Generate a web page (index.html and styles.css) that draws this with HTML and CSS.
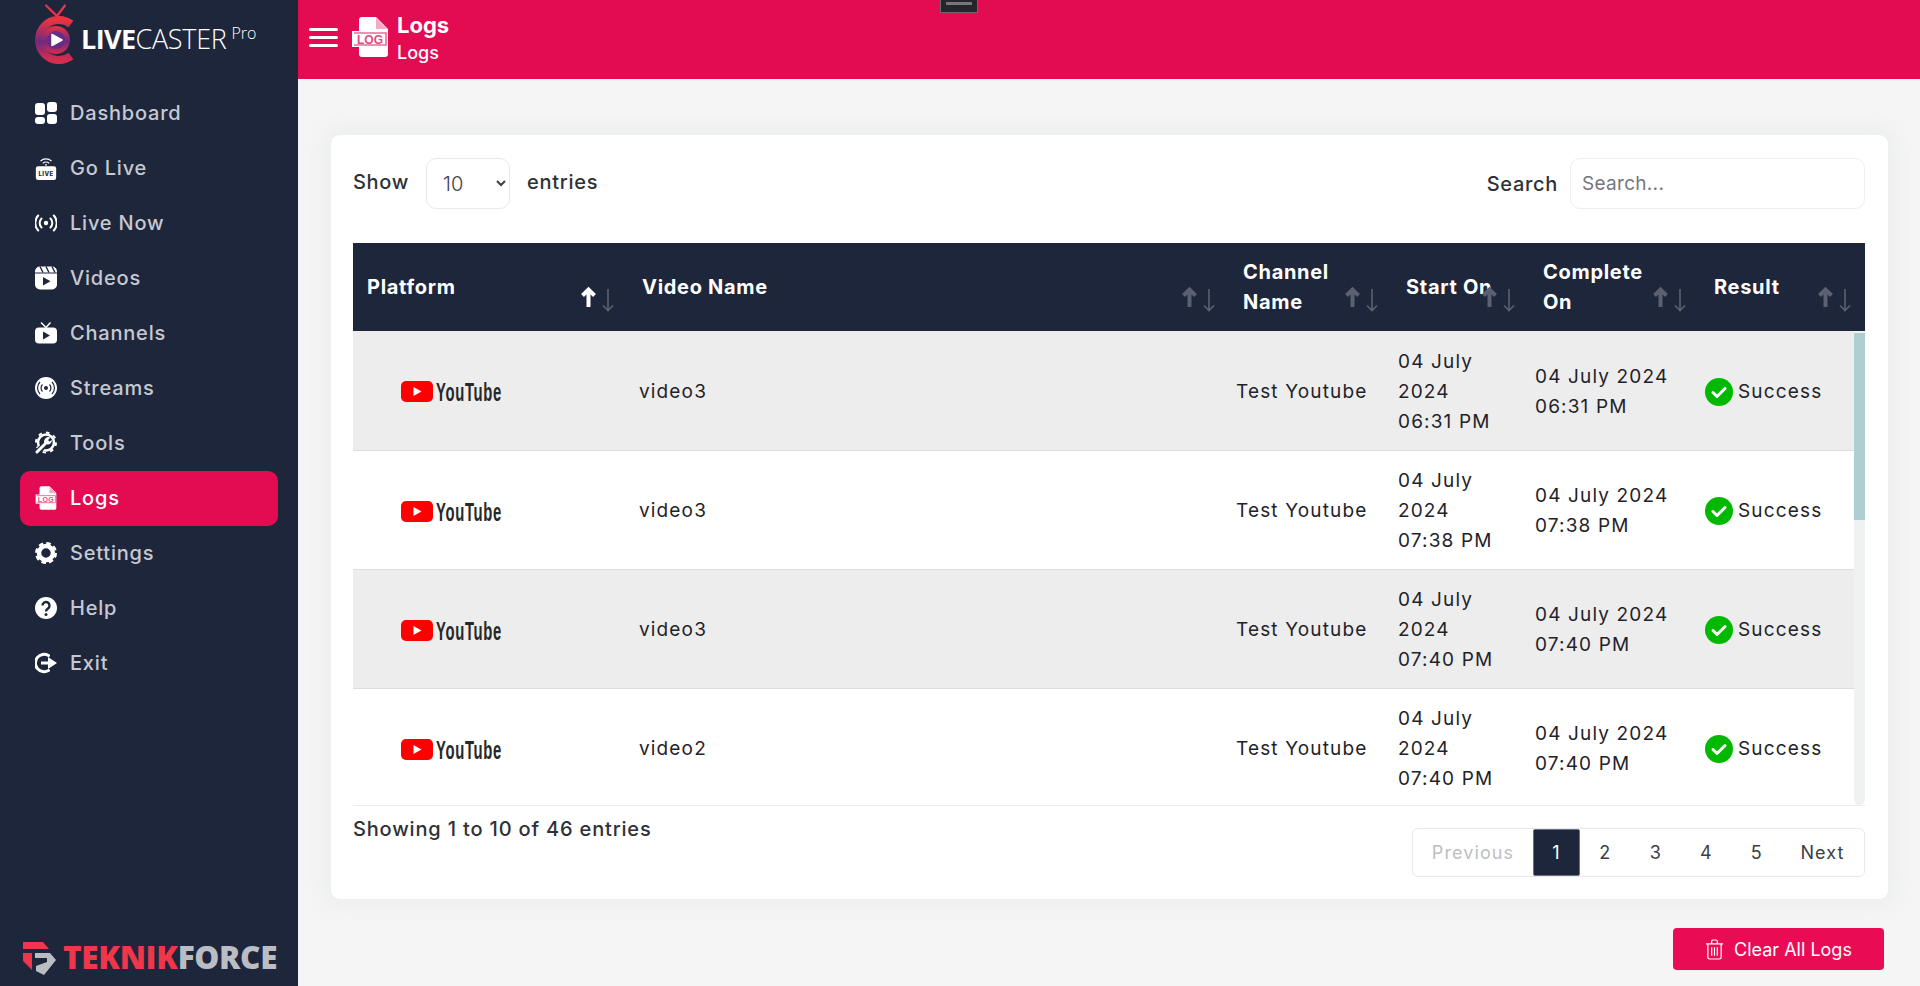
FILE: index.html
```html
<!DOCTYPE html>
<html lang="en">
<head>
<meta charset="utf-8">
<title>Logs - LiveCaster Pro</title>
<link rel="stylesheet" href="styles.css">
</head>
<body>
<svg class="defs" width="0" height="0" aria-hidden="true">
  <defs>
    <symbol id="i-log" viewBox="0 0 36 40">
      <path d="M7 0H24L36 12V37a3 3 0 0 1-3 3H10a3 3 0 0 1-3-3V30H0V14H7V3a3 3 0 0 1 3-3Z" fill="#fff"/>
      <path d="M24 1V12H35Z" fill="#f7a8c4"/>
      <path d="M2 16H34V28H2" fill="none" stroke="#f06a96" stroke-width="1.600"/>
      <text x="18" y="26.500" text-anchor="middle" class="logtxt">LOG</text>
    </symbol>
    <symbol id="i-yt" viewBox="0 0 101 21">
      <rect x="0" y="0" width="32" height="21" rx="5" fill="#f00"/>
      <path d="M12.500 6V15L20.500 10.500Z" fill="#fff"/>
      <text x="35" y="19.500" textLength="66" lengthAdjust="spacingAndGlyphs" class="yttxt">YouTube</text>
    </symbol>
    <symbol id="i-check" viewBox="0 0 28 28">
      <circle cx="14" cy="14" r="14" fill="#00b900"/>
      <path d="M8 14.500l4 4 8-8" fill="none" stroke="#fff" stroke-width="3" stroke-linecap="round" stroke-linejoin="round"/>
    </symbol>
    <symbol id="i-sort" viewBox="0 0 36 28">
      <path class="sort-up" d="M8.500 22V5M2.500 10.500L8.500 4.500L14.500 10.500" fill="none" stroke-width="4"/>
      <path class="sort-down" d="M28 4V25.500M23 20.500L28 25.500L33 20.500" fill="none" stroke-width="1.600"/>
    </symbol>
    <linearGradient id="lc" x1="0" y1="0" x2="0" y2="1">
      <stop offset="0" stop-color="#ea3340"/>
      <stop offset=".55" stop-color="#6d2a80"/>
      <stop offset="1" stop-color="#d92c4c"/>
    </linearGradient>
  </defs>
</svg>

<aside class="sidebar">
  <div class="brand">
    <svg class="brand-mark" viewBox="0 0 46 62" width="46" height="62" aria-hidden="true">
      <path d="M16 2.500L27 13L35 2.500" fill="none" stroke="#e2384a" stroke-width="2.200" stroke-linecap="round"/>
      <path d="M41 21A20 20 0 1 0 41 53" fill="none" stroke="url(#lc)" stroke-width="8"/>
      <circle cx="26" cy="37" r="14" fill="url(#lc)"/>
      <circle cx="26" cy="37" r="9" fill="#6a2b84"/>
      <path d="M22 31.500L32 37L22 42.500Z" fill="#fff" stroke="#fff" stroke-width="1.500" stroke-linejoin="round"/>
    </svg>
    <div class="brand-word"><b>LIVE</b><span>CASTER</span><sup>Pro</sup></div>
  </div>

  <nav class="nav">
    <a class="nav-item">
      <svg class="ico" viewBox="0 0 22 22"><rect x="0" y="1" width="10" height="12" rx="3" fill="#fff"/><rect x="0" y="15" width="10" height="7" rx="3" fill="#fff"/><rect x="12" y="0" width="10" height="10" rx="3" fill="#fff"/><rect x="12" y="12" width="10" height="10" rx="3" fill="#fff"/></svg>
      <span>Dashboard</span>
    </a>
    <a class="nav-item">
      <svg class="ico" viewBox="0 0 22 26"><path d="M5 5.500a8.500 8.500 0 0 1 12 0M7.500 8a5 5 0 0 1 7 0" fill="none" stroke="#fff" stroke-width="1.300"/><circle cx="11" cy="9.600" r="1" fill="#fff"/><rect x="0" y="11" width="22" height="15" rx="2.500" fill="#fff"/><text x="11" y="21.500" text-anchor="middle" class="livetxt">LIVE</text></svg>
      <span>Go Live</span>
    </a>
    <a class="nav-item">
      <svg class="ico" viewBox="0 0 22 18"><circle cx="11" cy="9" r="2.200" fill="#fff"/><path d="M6.500 4.500a6.500 6.500 0 0 0 0 9M15.500 4.500a6.500 6.500 0 0 1 0 9M3.200 1.500a11 11 0 0 0 0 15M18.800 1.500a11 11 0 0 1 0 15" fill="none" stroke="#fff" stroke-width="2" stroke-linecap="round"/></svg>
      <span>Live Now</span>
    </a>
    <a class="nav-item">
      <svg class="ico" viewBox="0 0 22 23"><path d="M0 7H22V18a5 5 0 0 1-5 5H5a5 5 0 0 1-5-5Z" fill="#fff"/><path d="M5 0H17a5 5 0 0 1 5 5V6H0V5a5 5 0 0 1 5-5Z" fill="#fff"/><path d="M5 0L8 6M11 0L14 6M17 0L20 6" stroke="#1e263b" stroke-width="1.400"/><path d="M8 10.500V19L15.500 14.700Z" fill="#1e263b"/></svg>
      <span>Videos</span>
    </a>
    <a class="nav-item">
      <svg class="ico" viewBox="0 0 22 21"><path d="M6 0L11 5L15.500 0" fill="none" stroke="#fff" stroke-width="1.500"/><rect x="0" y="5" width="22" height="16" rx="4" fill="#fff"/><path d="M8 9V17L15 13Z" fill="#1e263b"/></svg>
      <span>Channels</span>
    </a>
    <a class="nav-item">
      <svg class="ico" viewBox="0 0 22 22"><circle cx="11" cy="11" r="11" fill="#fff"/><circle cx="11" cy="11" r="2" fill="#1e263b"/><path d="M7.500 7.500a5 5 0 0 0 0 7M14.500 7.500a5 5 0 0 1 0 7M5 5a8.500 8.500 0 0 0 0 12M17 5a8.500 8.500 0 0 1 0 12" fill="none" stroke="#1e263b" stroke-width="1.200"/></svg>
      <span>Streams</span>
    </a>
    <a class="nav-item">
      <svg class="ico" viewBox="0 0 22 22"><circle cx="11" cy="10.500" r="8" fill="none" stroke="#fff" stroke-width="2.600"/><circle cx="11" cy="10.500" r="10" fill="none" stroke="#fff" stroke-width="2" stroke-dasharray="3.500 4.300"/><path d="M2 20.500L10 12.500" stroke="#1e263b" stroke-width="6"/><path d="M2 20L10 12" stroke="#fff" stroke-width="3" stroke-linecap="round"/><path d="M15.500 5.500a4.500 4.500 0 0 0-6 6l3 1a4.500 4.500 0 0 0 4.500-4.500l-2.500 1.500-1.500-1.500Z" fill="#fff"/></svg>
      <span>Tools</span>
    </a>
    <a class="nav-item active">
      <svg class="ico" viewBox="0 0 22 25"><use href="#i-log"/></svg>
      <span>Logs</span>
    </a>
    <a class="nav-item">
      <svg class="ico" viewBox="0 0 22 22"><circle cx="11" cy="11" r="7" fill="none" stroke="#fff" stroke-width="4.500"/><circle cx="11" cy="11" r="9.500" fill="none" stroke="#fff" stroke-width="3" stroke-dasharray="4.400 3.060"/></svg>
      <span>Settings</span>
    </a>
    <a class="nav-item">
      <svg class="ico" viewBox="0 0 22 22"><circle cx="11" cy="11" r="11" fill="#fff"/><path d="M7.500 8.500a3.500 3.500 0 1 1 5.500 2.900c-1.300.9-2 1.500-2 3" fill="none" stroke="#1e263b" stroke-width="2.400"/><circle cx="11" cy="17.500" r="1.500" fill="#1e263b"/></svg>
      <span>Help</span>
    </a>
    <a class="nav-item">
      <svg class="ico" viewBox="0 0 22 22"><path d="M13.500 3.500A8.700 8.700 0 1 0 13.500 18.500" fill="none" stroke="#fff" stroke-width="3" stroke-linecap="round"/><path d="M6 9.500H13V5L22 11L13 17V12.500H6Z" fill="#fff"/></svg>
      <span>Exit</span>
    </a>
  </nav>

  <div class="vendor">
    <svg class="vendor-mark" viewBox="0 0 34 34" width="34" height="34" aria-hidden="true">
      <path d="M0 0H20L26 7H0Z" fill="#f0364a"/>
      <path d="M0 11H9V28L0 19Z" fill="#f0364a"/>
      <path d="M12 11H27L33 18L21 33L13 29V24L24 20V16H12Z" fill="#babdc4"/>
    </svg>
    <div class="vendor-word"><b>TEKNIK</b><span>FORCE</span></div>
  </div>
</aside>

<div class="main">
  <div class="notch"><i></i></div>
  <header class="topbar">
    <button class="burger" aria-label="Menu"><i></i><i></i><i></i></button>
    <svg class="top-ico" viewBox="0 0 36 40"><use href="#i-log"/></svg>
    <div class="top-title">
      <strong>Logs</strong>
      <span>Logs</span>
    </div>
  </header>

  <section class="content">
    <div class="card">
      <div class="toolbar">
        <div class="length">
          <span class="lbl">Show</span>
          <select class="entries"><option>10</option></select>
          <span class="lbl">entries</span>
        </div>
        <div class="search">
          <span class="lbl">Search</span>
          <input class="search-input" type="text" placeholder="Search...">
        </div>
      </div>

      <div class="grid-wrap">
        <table class="thead-table">
          <colgroup><col class="h1"><col class="h2"><col class="h3"><col class="h4"><col class="h5"><col class="h6"></colgroup>
          <thead>
            <tr>
              <th>Platform<svg class="sort first"><use href="#i-sort"/></svg></th>
              <th>Video Name<svg class="sort"><use href="#i-sort"/></svg></th>
              <th>Channel Name<svg class="sort"><use href="#i-sort"/></svg></th>
              <th class="nowrap">Start On<svg class="sort"><use href="#i-sort"/></svg></th>
              <th>Complete On<svg class="sort"><use href="#i-sort"/></svg></th>
              <th>Result<svg class="sort"><use href="#i-sort"/></svg></th>
            </tr>
          </thead>
        </table>
        <div class="tbody-row">
          <div class="tbody-scroll">
            <table class="tbody-table">
              <colgroup><col class="b1"><col class="b2"><col class="b3"><col class="b4"><col class="b5"><col class="b6"></colgroup>
              <tbody>
                <tr class="odd">
                  <td class="plat"><svg class="yt"><use href="#i-yt"/></svg></td>
                  <td>video3</td><td>Test Youtube</td>
                  <td><span class="d">04 July 2024</span><span class="d">06:31 PM</span></td>
                  <td><span class="d">04 July 2024</span><span class="d">06:31 PM</span></td>
                  <td><div class="ok"><svg class="check"><use href="#i-check"/></svg>Success</div></td>
                </tr>
                <tr>
                  <td class="plat"><svg class="yt"><use href="#i-yt"/></svg></td>
                  <td>video3</td><td>Test Youtube</td>
                  <td><span class="d">04 July 2024</span><span class="d">07:38 PM</span></td>
                  <td><span class="d">04 July 2024</span><span class="d">07:38 PM</span></td>
                  <td><div class="ok"><svg class="check"><use href="#i-check"/></svg>Success</div></td>
                </tr>
                <tr class="odd">
                  <td class="plat"><svg class="yt"><use href="#i-yt"/></svg></td>
                  <td>video3</td><td>Test Youtube</td>
                  <td><span class="d">04 July 2024</span><span class="d">07:40 PM</span></td>
                  <td><span class="d">04 July 2024</span><span class="d">07:40 PM</span></td>
                  <td><div class="ok"><svg class="check"><use href="#i-check"/></svg>Success</div></td>
                </tr>
                <tr>
                  <td class="plat"><svg class="yt"><use href="#i-yt"/></svg></td>
                  <td>video2</td><td>Test Youtube</td>
                  <td><span class="d">04 July 2024</span><span class="d">07:40 PM</span></td>
                  <td><span class="d">04 July 2024</span><span class="d">07:40 PM</span></td>
                  <td><div class="ok"><svg class="check"><use href="#i-check"/></svg>Success</div></td>
                </tr>
              </tbody>
            </table>
          </div>
          <div class="track"><div class="thumb"></div></div>
        </div>
      </div>

      <div class="foot">
        <div class="info">Showing 1 to 10 of 46 entries</div>
        <div class="pager">
          <a class="pg prev">Previous</a>
          <a class="pg num current">1</a>
          <a class="pg num">2</a>
          <a class="pg num">3</a>
          <a class="pg num">4</a>
          <a class="pg num">5</a>
          <a class="pg next">Next</a>
        </div>
      </div>
    </div>

    <div class="actions">
      <button class="clear">
        <svg class="trash" viewBox="0 0 20 22"><path d="M1 5H19M7 5V2.500a1.500 1.500 0 0 1 1.500-1.500h3A1.500 1.500 0 0 1 13 2.500V5M3 5V19a2 2 0 0 0 2 2H15a2 2 0 0 0 2-2V5M7 8.500V17.500M10 8.500V17.500M13 8.500V17.500" fill="none" stroke="#fff" stroke-width="1.300"/></svg>
        Clear All Logs
      </button>
    </div>
  </section>
</div>
</body>
</html>
```
FILE: styles.css
```css
* { box-sizing: border-box; }
html, body { margin: 0; height: 100%; }
body {
  display: flex;
  height: 986px;
  overflow: hidden;
  font-family: Inter, "Liberation Sans", sans-serif;
  font-size: 18px;
  color: #212529;
  background: #f5f5f5;
}
.defs { position: absolute; }
.logtxt { font: 700 12px "Liberation Sans", sans-serif; fill: #ea4a80; }
.yttxt { font: 700 25px "Liberation Sans", sans-serif; fill: #282828; }
.livetxt { font: 800 6.5px Inter, sans-serif; fill: #1e263b; letter-spacing: .4px; }

/* sidebar */
.sidebar {
  position: relative;
  z-index: 1;
  width: 298px;
  flex: none;
  display: flex;
  flex-direction: column;
  background: #1e263b;
}
.brand {
  height: 86px;
  display: flex;
  align-items: flex-start;
  padding: 3px 0 0 30px;
}
.brand-mark { flex: none; margin-right: 5px; }
.brand-word {
  margin-top: 18px;
  font-family: "Open Sans", sans-serif;
  font-size: 27px;
  line-height: 36px;
  color: #fff;
  white-space: nowrap;
}
.brand-word b { font-weight: 700; letter-spacing: -.6px; }
.brand-word span { font-weight: 300; letter-spacing: -.3px; }
.brand-word sup {
  font-size: 16px;
  font-weight: 300;
  line-height: 0;
  margin-left: 5px;
  vertical-align: 10px;
}
.nav { display: flex; flex-direction: column; padding: 0 20px; }
.nav-item {
  height: 55px;
  display: flex;
  align-items: center;
  gap: 13px;
  padding: 0 0 2px 15px;
  border-radius: 10px;
  font-size: 20px;
  font-weight: 500;
  letter-spacing: .8px;
  color: #c6c9d1;
}
.nav-item.active { background: #e30b52; color: #fff; }
.ico { width: 22px; height: 24px; flex: none; }
.vendor {
  margin-top: auto;
  height: 62px;
  display: flex;
  align-items: flex-start;
  padding: 18px 0 0 23px;
}
.vendor-mark { flex: none; margin-right: 6px; }
.vendor-word {
  margin-top: -4px;
  font-family: "Open Sans", sans-serif;
  font-size: 31.5px;
  font-weight: 800;
  line-height: 38px;
  letter-spacing: -.3px;
  white-space: nowrap;
}
.vendor-word b { font-weight: 800; color: #f0364a; }
.vendor-word span { color: #babdc4; }

/* main */
.main { flex: 1; min-width: 0; display: flex; flex-direction: column; position: relative; }
.notch {
  position: absolute;
  z-index: 2;
  top: 0;
  left: 642px;
  width: 38px;
  height: 13px;
  background: #23262a;
  border: 1px solid #6a6a6a;
  border-top: 0;
  padding: 2px 5px 0;
}
.notch i { display: block; height: 3px; background: #777; }
.topbar {
  position: relative;
  z-index: 1;
  height: 79px;
  flex: none;
  display: flex;
  align-items: flex-start;
  background: #e30b52;
  color: #fff;
}
.burger {
  width: 29px;
  margin: 28px 14px 0 11px;
  padding: 0;
  border: 0;
  background: none;
  display: flex;
  flex-direction: column;
  gap: 5px;
}
.burger i { display: block; height: 3px; border-radius: 2px; background: #fff; }
.top-ico { width: 36px; height: 40px; flex: none; margin: 17px 9px 0 0; }
.top-title { display: flex; flex-direction: column; padding-top: 10px; }
.top-title strong { font-size: 22px; line-height: 31px; font-weight: 700; }
.top-title span { font-size: 18px; line-height: 24px; font-weight: 500; }

.content { flex: 1; padding: 55px 31px 0 32px; }
.card {
  height: 766px;
  padding: 23px 23px 0 22px;
  background: #fff;
  border: 1px solid #eef0f0;
  border-radius: 10px;
  box-shadow: 0 0 16px 8px rgba(235, 237, 237, .7);
}
.toolbar {
  display: flex;
  justify-content: space-between;
  align-items: center;
  height: 51px;
  margin-bottom: 34px;
}
.lbl { font-size: 20px; font-weight: 500; letter-spacing: .7px; color: #2e3137; }
.length { display: flex; align-items: center; gap: 17px; }
.length .lbl { position: relative; top: -2px; }
.entries {
  width: 84px;
  height: 51px;
  padding-left: 12px;
  background: #fff;
  border: 1px solid #e8e9ee;
  border-radius: 10px;
  font: 300 20px Inter, sans-serif;
  color: #3c4046;
}
.search { display: flex; align-items: center; gap: 12px; }
.search-input {
  width: 295px;
  height: 51px;
  padding: 0 11px;
  border: 1px solid #eceef0;
  border-radius: 10px;
  font: 400 19px Inter, sans-serif;
  letter-spacing: .3px;
}
.search-input::placeholder { color: #73777c; }

/* table */
.grid-wrap { width: 1512px; }
table { border-collapse: collapse; table-layout: fixed; width: 100%; }
.h1 { width: 275px; } .h2 { width: 601px; } .h3 { width: 163px; }
.h4 { width: 137px; } .h5 { width: 171px; } .h6 { width: 165px; }
.b1 { width: 278px; } .b2 { width: 597px; } .b3 { width: 162px; }
.b4 { width: 137px; } .b5 { width: 169px; } .b6 { width: 158px; }
th {
  position: relative;
  height: 88px;
  padding: 0 50px 0 14px;
  background: #1e263b;
  color: #fff;
  font-size: 20px;
  font-weight: 700;
  line-height: 30px;
  letter-spacing: .7px;
  text-align: left;
}
th.nowrap { white-space: nowrap; padding-right: 0; }
.sort {
  position: absolute;
  right: 12px;
  top: 42px;
  width: 36px;
  height: 28px;
  stroke: #5b6171;
}
.sort-up { stroke: inherit; }
.sort-down { stroke: #5b6171; }
.sort.first { stroke: #fff; }
.tbody-row { display: flex; height: 475px; border-bottom: 1px solid #e9edf2; }
.tbody-scroll { flex: 1; min-width: 0; overflow: hidden; }
.track { width: 11px; flex: none; padding-top: 2px; background: #f0f2f2; border-radius: 0 0 6px 6px; }
.thumb { height: 187px; background: #aecfd1; }
td {
  height: 119px;
  padding: 3px 8px 0;
  font-size: 19px;
  line-height: 30px;
  letter-spacing: 1.15px;
  color: #1f2329;
  border-bottom: 1px solid #dedede;
}
.d { display: block; }
.odd td { background: #ededed; }
td.plat { padding-left: 48px; }
.yt { display: block; width: 101px; height: 21px; }
.ok { display: flex; align-items: center; gap: 5px; padding-left: 1px; white-space: nowrap; }
.check { width: 28px; height: 28px; flex: none; }

/* footer of the card */
.foot { display: flex; justify-content: space-between; align-items: flex-start; }
.info { padding-top: 9px; font-size: 20px; font-weight: 500; letter-spacing: .83px; color: #2e3137; line-height: 28px; }
.pager {
  display: flex;
  align-items: center;
  height: 49px;
  margin-top: 22px;
  border: 1px solid #e6e8ec;
  border-radius: 6px;
  font-size: 18px;
  letter-spacing: 1.1px;
  color: #3a3e46;
}
.pg { display: flex; align-items: center; justify-content: center; height: 47px; padding-bottom: 1px; }
.prev { width: 120px; color: #bcbec2; }
.num { width: 50.500px; padding-right: 2px; }
.current { width: 47px; margin-right: 1px; padding-right: 0; background: #1e263b; color: #fff; border: 1px solid #6c7280; border-radius: 2px; }
.next { width: 81px; padding-right: 2px; }

.actions { display: flex; justify-content: flex-end; padding: 28px 5px 0 0; }
.clear {
  width: 211px;
  height: 42px;
  display: flex;
  align-items: center;
  justify-content: center;
  gap: 10px;
  border: 0;
  border-radius: 4px;
  background: #e90c55;
  color: #fff;
  font: 400 18px Inter, sans-serif;
}
.trash { width: 19px; height: 21px; flex: none; }
```
